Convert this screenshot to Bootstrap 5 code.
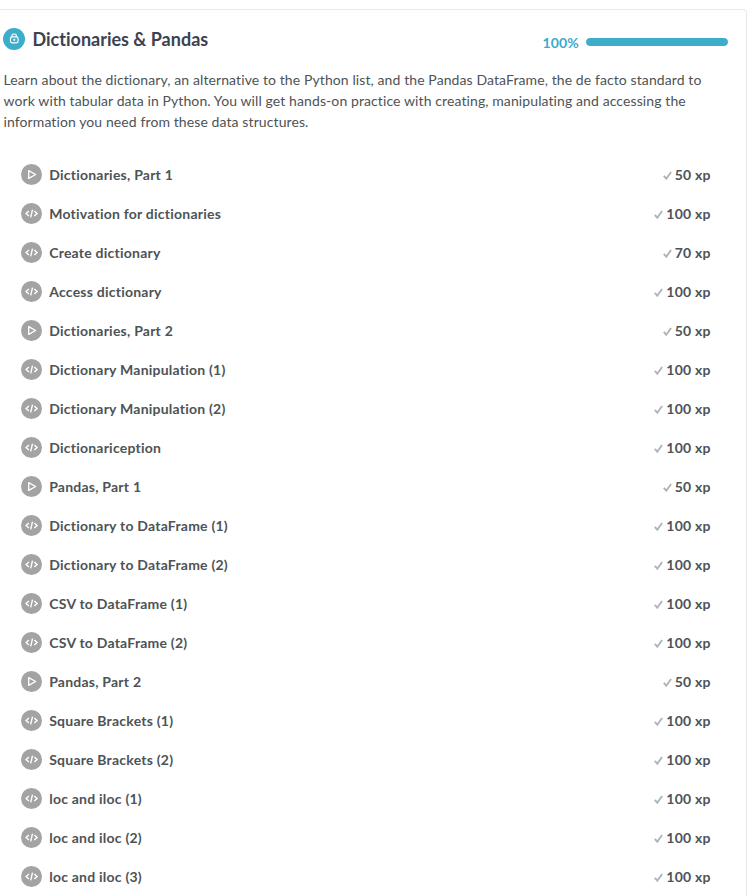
<!DOCTYPE html>
<html lang="en">
<head>
<meta charset="utf-8">
<meta name="viewport" content="width=device-width, initial-scale=1">
<title>Dictionaries &amp; Pandas</title>
<link rel="stylesheet" href="https://cdn.jsdelivr.net/npm/bootstrap@5.3.0/dist/css/bootstrap.min.css">
<style>
body{font-family:Lato,"Liberation Sans",sans-serif;font-variant-ligatures:none;color:#4d5356;background:#fff;height:896px;overflow:hidden}
.chapter{width:747px;height:920px;margin-top:9px;border:1px solid #e6eaeb;border-left:0;border-radius:0 4px 4px 0}
.chapter-head{height:58px;margin-bottom:1px;padding:0 18px 0 3px}
.chapter-title{font-size:18px;line-height:24px;font-weight:700;color:#3d4251;margin-left:7.5px}
.percent{font-size:14px;line-height:20px;color:#3aaacb;font-weight:700;letter-spacing:.15px;margin-top:7px}
.chapter-bar{width:142px;height:8px;margin-left:7px;margin-top:6px;border-radius:4px;background:#e6eaeb}
.chapter-bar .progress-bar{background:#3cadcb;border-radius:4px}
.summary{font-size:14px;line-height:21px;letter-spacing:.1px;padding-left:3.5px;height:86px;white-space:nowrap}
.exercise{height:39px;padding:0 35.3px 0 21px;font-size:14px;line-height:21px;font-weight:700;letter-spacing:.23px}
.exercise svg{flex:none}
.exercise .kind{width:21px;height:21px;margin-right:7.2px}
.tick{width:9px;height:9px;margin-right:3px;margin-top:2px}
</style>
<script src="https://cdn.jsdelivr.net/npm/bootstrap@5.3.0/dist/js/bootstrap.bundle.min.js"></script>
</head>
<body>
<svg class="d-none">
  <symbol id="video" viewBox="0 0 21 21"><circle cx="10.5" cy="10.5" r="10.5" fill="#a3a3a3"/><path d="M7.7 6.6v7.8l6.9-3.9z" fill="none" stroke="#fff" stroke-width="1.3" stroke-linejoin="round"/></symbol>
  <symbol id="code" viewBox="0 0 21 21"><circle cx="10.5" cy="10.5" r="10.5" fill="#a3a3a3"/><path d="M7.9 7.9 5.1 10.5l2.8 2.6M13.3 7.9l2.8 2.6-2.8 2.6M11.5 6.7 9.7 14.3" fill="none" stroke="#fff" stroke-width="1.4"/></symbol>
  <symbol id="tick" viewBox="0 0 9 9"><path d="M.8 4.8 3.3 7.7 8.1 1" fill="none" stroke="#aeb3bb" stroke-width="1.9"/></symbol>
</svg>
<main class="chapter">
  <header class="chapter-head d-flex align-items-center">
    <svg width="22" height="22" viewBox="0 0 22 22"><circle cx="11" cy="11" r="11" fill="#3cadcb"/><g fill="none" stroke="#fff"><path d="M9 9V7.6C9 5.5 13.3 5.5 13.3 7.6V9" stroke-width="1.1"/><rect x="7.5" y="8.9" width="7.6" height="5.9" rx="1.8" stroke-width="1.2"/></g><circle cx="11.3" cy="11.8" r="1.1" fill="#fff"/></svg>
    <h1 class="chapter-title mb-0">Dictionaries &amp; Pandas</h1>
    <span class="percent ms-auto">100%</span>
    <div class="progress chapter-bar"><div class="progress-bar w-100"></div></div>
  </header>
  <p class="summary mb-0">Learn about the dictionary, an alternative to the Python list, and the Pandas DataFrame, the de facto standard to<br>work with tabular data in Python. You will get hands-on practice with creating, manipulating and accessing the<br>information you need from these data structures.</p>
  <ul class="list-unstyled mb-0">
    <li class="exercise d-flex align-items-center"><svg class="kind"><use href="#video"/></svg><span>Dictionaries, Part 1</span><svg class="tick ms-auto"><use href="#tick"/></svg><span>50 xp</span></li>
    <li class="exercise d-flex align-items-center"><svg class="kind"><use href="#code"/></svg><span>Motivation for dictionaries</span><svg class="tick ms-auto"><use href="#tick"/></svg><span>100 xp</span></li>
    <li class="exercise d-flex align-items-center"><svg class="kind"><use href="#code"/></svg><span>Create dictionary</span><svg class="tick ms-auto"><use href="#tick"/></svg><span>70 xp</span></li>
    <li class="exercise d-flex align-items-center"><svg class="kind"><use href="#code"/></svg><span>Access dictionary</span><svg class="tick ms-auto"><use href="#tick"/></svg><span>100 xp</span></li>
    <li class="exercise d-flex align-items-center"><svg class="kind"><use href="#video"/></svg><span>Dictionaries, Part 2</span><svg class="tick ms-auto"><use href="#tick"/></svg><span>50 xp</span></li>
    <li class="exercise d-flex align-items-center"><svg class="kind"><use href="#code"/></svg><span>Dictionary Manipulation (1)</span><svg class="tick ms-auto"><use href="#tick"/></svg><span>100 xp</span></li>
    <li class="exercise d-flex align-items-center"><svg class="kind"><use href="#code"/></svg><span>Dictionary Manipulation (2)</span><svg class="tick ms-auto"><use href="#tick"/></svg><span>100 xp</span></li>
    <li class="exercise d-flex align-items-center"><svg class="kind"><use href="#code"/></svg><span>Dictionariception</span><svg class="tick ms-auto"><use href="#tick"/></svg><span>100 xp</span></li>
    <li class="exercise d-flex align-items-center"><svg class="kind"><use href="#video"/></svg><span>Pandas, Part 1</span><svg class="tick ms-auto"><use href="#tick"/></svg><span>50 xp</span></li>
    <li class="exercise d-flex align-items-center"><svg class="kind"><use href="#code"/></svg><span>Dictionary to DataFrame (1)</span><svg class="tick ms-auto"><use href="#tick"/></svg><span>100 xp</span></li>
    <li class="exercise d-flex align-items-center"><svg class="kind"><use href="#code"/></svg><span>Dictionary to DataFrame (2)</span><svg class="tick ms-auto"><use href="#tick"/></svg><span>100 xp</span></li>
    <li class="exercise d-flex align-items-center"><svg class="kind"><use href="#code"/></svg><span>CSV to DataFrame (1)</span><svg class="tick ms-auto"><use href="#tick"/></svg><span>100 xp</span></li>
    <li class="exercise d-flex align-items-center"><svg class="kind"><use href="#code"/></svg><span>CSV to DataFrame (2)</span><svg class="tick ms-auto"><use href="#tick"/></svg><span>100 xp</span></li>
    <li class="exercise d-flex align-items-center"><svg class="kind"><use href="#video"/></svg><span>Pandas, Part 2</span><svg class="tick ms-auto"><use href="#tick"/></svg><span>50 xp</span></li>
    <li class="exercise d-flex align-items-center"><svg class="kind"><use href="#code"/></svg><span>Square Brackets (1)</span><svg class="tick ms-auto"><use href="#tick"/></svg><span>100 xp</span></li>
    <li class="exercise d-flex align-items-center"><svg class="kind"><use href="#code"/></svg><span>Square Brackets (2)</span><svg class="tick ms-auto"><use href="#tick"/></svg><span>100 xp</span></li>
    <li class="exercise d-flex align-items-center"><svg class="kind"><use href="#code"/></svg><span>loc and iloc (1)</span><svg class="tick ms-auto"><use href="#tick"/></svg><span>100 xp</span></li>
    <li class="exercise d-flex align-items-center"><svg class="kind"><use href="#code"/></svg><span>loc and iloc (2)</span><svg class="tick ms-auto"><use href="#tick"/></svg><span>100 xp</span></li>
    <li class="exercise d-flex align-items-center"><svg class="kind"><use href="#code"/></svg><span>loc and iloc (3)</span><svg class="tick ms-auto"><use href="#tick"/></svg><span>100 xp</span></li>
  </ul>
</main>
</body>
</html>
